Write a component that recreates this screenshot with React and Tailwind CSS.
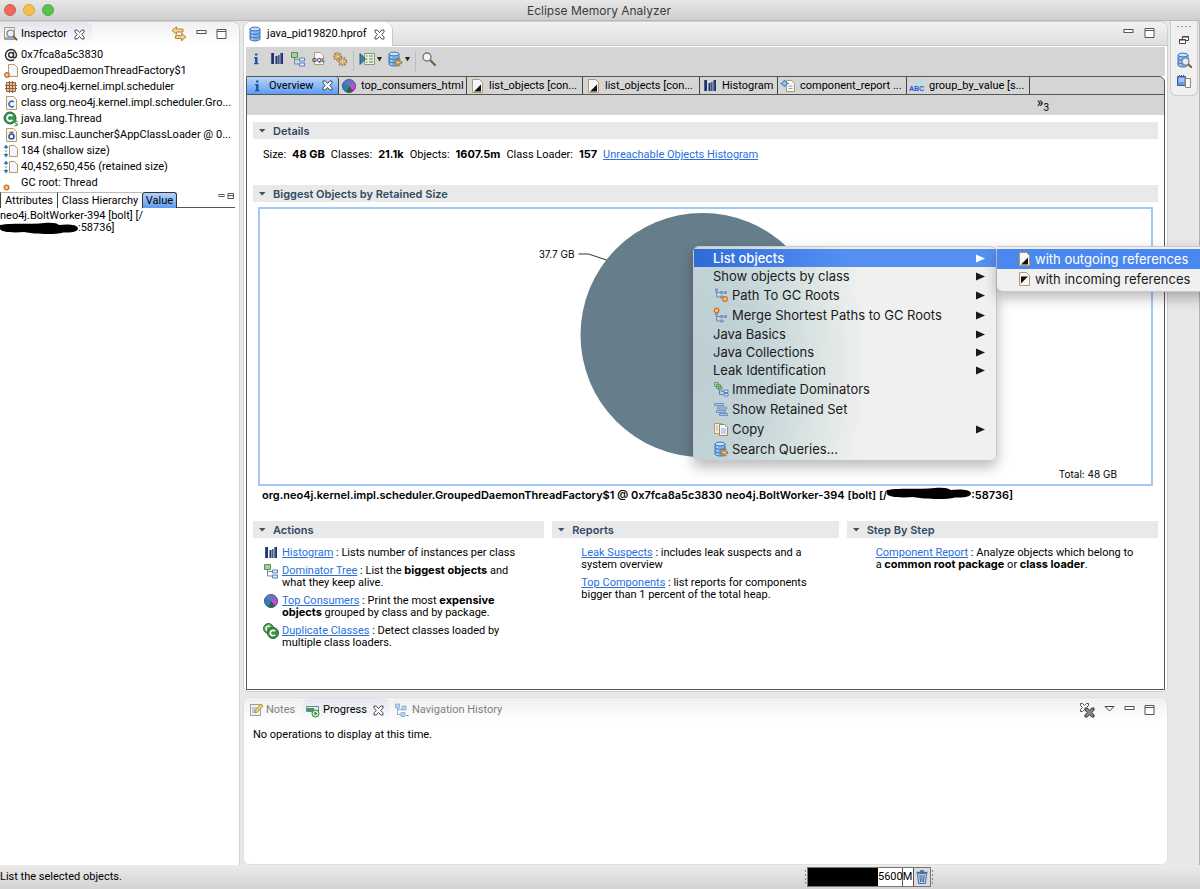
import React from 'react';

const Svg = ({ w = 16, h = 16, className = '', children }) => (
  <svg width={w} height={h} viewBox={`0 0 ${w} ${h}`} className={`shrink-0 ${className}`} fill="none" aria-hidden="true">
    {children}
  </svg>
);

const Page = ({ x = 3, y = 1, w = 10, h = 13 }) => (
  <path
    d={`M${x + 0.5} ${y + 0.5}h${w - 4}l3 3v${h - 4}h-${w - 1}z`}
    fill="#f4f8fe"
    stroke="#b79a5e"
  />
);

const CloseIcon = () => (
  <Svg w={11} h={11}>
    <path d="M1 1h2.200l2.300 2.600L7.800 1H10v2.200L7.600 5.500 10 7.800V10H7.800L5.500 7.400 3.200 10H1V7.800l2.400-2.300L1 3.200z" fill="#fff" stroke="#3a3a3a" strokeWidth=".9" />
  </Svg>
);
const MinIcon = () => (
  <Svg w={11} h={11}><rect x="1" y="1.500" width="9" height="3" fill="#fff" stroke="#555" /></Svg>
);
const MaxIcon = () => (
  <Svg w={11} h={11}><path d="M1 .5h9v9H1zM1 2.500h9" fill="#fff" stroke="#555" /></Svg>
);
const Lens = ({ x = 0, y = 0 }) => (
  <g transform={`translate(${x} ${y})`}>
    <path d="M6.500 6.500l4 4" stroke="#8a5a2e" strokeWidth="2" strokeLinecap="round" />
    <circle cx="4.500" cy="4.500" r="3.500" fill="#e4f0f8" stroke="#7c8791" strokeWidth="1.200" />
  </g>
);
const InspectorIcon = () => (
  <Svg>
    <path d="M2.500 1.500h10v12h-10z" fill="#eef4fb" stroke="#b79a5e" />
    <path d="M3 11h9v2H3z" fill="#8fb0d6" />
    <Lens x={4} y={3} />
  </Svg>
);
const SyncIcon = () => (
  <Svg>
    <path d="M5.500 .8L1 4.500l4.500 3.700V6H12V3H5.500zM10.500 7.300L15 11l-4.500 3.800V12.500H4.500v-3h6z" fill="#f3d489" stroke="#b98233" />
  </Svg>
);
const AtIcon = () => (
  <Svg>
    <path d="M10.500 5v5.200c1 1.300 3 .3 3-2.200a5.500 5.500 0 1 0-2.500 4.700M10.500 8a2.400 2.400 0 1 1-4.800 0 2.400 2.400 0 0 1 4.800 0z" stroke="#333" strokeWidth="1.500" />
  </Svg>
);
const Dot = ({ x, y }) => <circle cx={x} cy={y} r="2.300" fill="#f9c77e" stroke="#c9702a" strokeWidth="1.300" />;
const ObjectIcon = () => <Svg><Page x={5} /><Dot x={4} y={12} /></Svg>;
const PackageIcon = () => (
  <Svg>
    <path d="M3.500 3.500h9v9h-9z" fill="#e8c79b" stroke="#96603c" />
    <path d="M6.500 2v12M9.500 2v12M2 6.500h12M2 9.500h12" stroke="#96603c" />
  </Svg>
);
const ClassFileIcon = () => (
  <Svg><Page x={3} w={11} h={14} /><path d="M10.800 7a2.800 2.800 0 1 0 0 4" stroke="#3e6db5" strokeWidth="1.600" /></Svg>
);
const ThreadIcon = () => (
  <Svg>
    <circle cx="7" cy="7" r="6" fill="#3a9150" stroke="#256b38" />
    <path d="M9.500 5.200a3 3 0 1 0 0 3.600" stroke="#fff" strokeWidth="1.800" />
    <path d="M15 10.500c-3-1-4 1.200-2 1.800 2.500.7 1.500 3-1.500 2" stroke="#48a35c" strokeWidth="1.300" />
  </Svg>
);
const LoaderIcon = () => (
  <Svg><Page x={3} w={11} h={14} /><circle cx="8.500" cy="9.500" r="2.500" stroke="#2e5c9c" strokeWidth="1.600" /><path d="M6.500 5.500h4" stroke="#a34c3a" strokeWidth="1.500" /></Svg>
);
const SizeIcon = () => (
  <Svg>
    <Page x={6} y={2} w={9} h={12} />
    <path d="M3 4v8" stroke="#4b83bd" strokeDasharray="2 1" />
    <path d="M.5 5L3 1.500 5.500 5zM.5 11L3 14.500 5.500 11z" fill="#3974b3" />
  </Svg>
);
const RootIcon = () => <Svg><Dot x={3.500} y={12.500} /></Svg>;

const DbIcon = ({ children }) => (
  <Svg>
    <path d="M2 3v10c0 1 2 2 5 2s5-1 5-2V3" fill="#7fb2ea" stroke="#3f76bb" />
    <ellipse cx="7" cy="3" rx="5" ry="1.900" fill="#c9e1fa" stroke="#3f76bb" />
    <path d="M2 6.500c0 2.400 10 2.400 10 0M2 10c0 2.400 10 2.400 10 0" stroke="#3f76bb" />
    <path d="M4.500 6v1M4.500 9.500v1M4.500 12.500v1" stroke="#e2f0ff" strokeWidth="1.300" />
    {children}
  </Svg>
);
const GearShape = ({ x, y, r = 3 }) => (
  <g>
    <circle cx={x} cy={y} r={r + 0.8} stroke="#a37a3a" strokeWidth="1.600" strokeDasharray="1.500 1.300" />
    <circle cx={x} cy={y} r={r - 0.300} fill="#f6dc9c" stroke="#ac8443" />
    <circle cx={x} cy={y} r="1.200" fill="#fff" stroke="#9c7334" strokeWidth=".7" />
  </g>
);
const InfoIcon = () => (
  <Svg><path d="M7 2.500h2.500v2H7zM6 6h3.500v6h1v1.200H6V12h1V7.200H6z" fill="#2456a0" /></Svg>
);
const HistIcon = () => (
  <Svg>
    <path d="M2 2h3v11H2zM6.500 5h2v8h-2zM9.200 4h1.300v9H9.200zM11.500 2h2.500v11h-2.500z" fill="#1c3468" />
    <path d="M2.500 2v11M12 2v11" stroke="#4766a3" strokeWidth=".8" />
  </Svg>
);
const TreeIcon = () => (
  <Svg>
    <path d="M4.500 6v7h5M4.500 8.500h5" stroke="#6f8fb5" />
    <path d="M1.500 1.500h6v5h-6z" fill="#a7d08c" stroke="#5d8e55" />
    <path d="M9.500 7h5v3h-5zM9.500 12h5v3h-5z" fill="#dbe9fb" stroke="#5b83bb" />
  </Svg>
);
const OqlIcon = () => (
  <Svg>
    <Page x={3} />
    <text x="1" y="11" fontSize="6" fontWeight="700" fill="#37356f" className="font-['Liberation_Sans',sans-serif]">OQL</text>
  </Svg>
);
const GearsIcon = () => <Svg><GearShape x={5.500} y={5.500} r={3} /><GearShape x={10.500} y={10.500} r={3.200} /></Svg>;
const RunIcon = () => (
  <Svg>
    <path d="M5.500 2.500h10v11h-10z" fill="#e9f3df" stroke="#8b9a63" />
    <path d="M7 5h1.500M10 5h4M7 8h1.500M10 8h4M7 11h1.500M10 11h4" stroke="#54845c" />
    <path d="M1 2.500l5.500 5.500L1 13.500z" fill="#3f7fae" stroke="#275a80" />
  </Svg>
);
const DbGearIcon = () => <DbIcon><GearShape x={11} y={11.500} r={2.600} /></DbIcon>;
const DbLensIcon = () => <DbIcon><Lens x={5} y={5} /></DbIcon>;
const SearchIcon = () => (
  <Svg>
    <path d="M9 9l5 5" stroke="#8a5a2e" strokeWidth="2.200" strokeLinecap="round" />
    <circle cx="6" cy="6" r="4" fill="#f4f7f8" stroke="#777" strokeWidth="1.400" />
  </Svg>
);
const PieIcon = () => (
  <Svg>
    <circle cx="8" cy="8" r="6.500" fill="#6a73bd" />
    <path d="M8 8L4 13.200A6.500 6.500 0 0 1 2.500 4.500z" fill="#2f7dc0" />
    <path d="M8 8l6-3a6.500 6.500 0 0 1-1.500 8z" fill="#e03fdc" />
    <path d="M8 8l4.500 5a6.500 6.500 0 0 1-7.500.8z" fill="#246b3c" />
    <circle cx="8" cy="8" r="6.500" stroke="#3d5c94" />
  </Svg>
);
const OutIcon = () => <Svg><Page x={3} w={11} h={14} /><path d="M12 6.500v7H5z" fill="#111" /></Svg>;
const InIcon = () => <Svg><Page x={3} w={11} h={14} /><path d="M5 5.500h7L5 12.500z" fill="#111" /></Svg>;
const ReportIcon = () => (
  <Svg>
    <Page x={6} y={2} w={9} h={12} />
    <path d="M8.500 8h4M8.500 10.500h4" stroke="#7ea4d4" />
    <path d="M0 5.500h3M6 5.500h3M4.500 2.500l3 3-3 3-3-3z" fill="#a9c9ee" stroke="#4c86cc" strokeWidth="1.100" />
  </Svg>
);
const AbcIcon = () => (
  <Svg>
    <path d="M10 1h4v4h-4zM6 3h3v3H6z" fill="#9fe8ee" />
    <text x="0" y="13" fontSize="7" fontWeight="700" fill="#2455e8" className="font-['Liberation_Sans',sans-serif]">ABC</text>
  </Svg>
);
const DupIcon = () => (
  <Svg>
    <circle cx="5.500" cy="5.500" r="5" fill="#5aa65a" stroke="#2c7334" />
    <path d="M7 3.500a2.500 2.500 0 1 0-3 4" stroke="#fff" strokeWidth="1.300" />
    <circle cx="10" cy="10" r="5.500" fill="#3a9148" stroke="#256b30" />
    <path d="M12 8.200a2.700 2.700 0 1 0 0 3.600" stroke="#fff" strokeWidth="1.700" />
  </Svg>
);
const Branches = ({ y = 0 }) => (
  <g transform={`translate(0 ${y})`}>
    <path d="M3.500 3v7h8M3.500 5.500h8" stroke="#7187b8" />
    <path d="M2 1.500h3v3H2zM7 4h3v3H7zM11 4h3v3h-3zM7 8.500h3v3H7z" fill="#7f97c8" />
  </g>
);
const PathIcon = () => <Svg><Branches y={0} /><Dot x={12} y={12} /></Svg>;
const MergeIcon = () => <Svg><Branches y={4} /><Dot x={3.500} y={3.500} /></Svg>;
const DomIcon = () => (
  <Svg>
    <path d="M1.500 1.500h4v4h-4zM3.500 3.500h4v4h-4zM5.500 5.500h3.500v3.500H5.500z" fill="#a9cf98" stroke="#5c9160" strokeWidth=".8" />
    <path d="M6.500 9v4.500h4M8 10.500h3" stroke="#5b83bb" />
    <path d="M11 9h4v2.500h-4zM11 12.500h4V15h-4z" fill="#dbe9fb" stroke="#5b83bb" />
  </Svg>
);
const SetIcon = () => (
  <Svg>
    <path d="M1.500 2.500h9v2h-9zM4.500 6h9v2h-9zM3.500 9.500h9v2h-9zM6.500 12.500h8v2h-8z" fill="#a9c2e6" stroke="#6485b8" strokeWidth=".8" />
  </Svg>
);
const CopyIcon = () => (
  <Svg>
    <path d="M1.500 2.500h7v10h-7z" fill="#f7efd9" stroke="#b79a5e" />
    <path d="M6.500 3.500h5l3 3v8h-8z" fill="#f2f7fe" stroke="#a08a5c" />
    <path d="M8 8h5M8 10h5M8 12h5M3 5h2M3 7h2M3 9h2" stroke="#7d99c4" strokeWidth=".8" />
  </Svg>
);
const NotesIcon = () => (
  <Svg>
    <path d="M2.500 2.500h10v11h-10z" fill="#f1f1ee" stroke="#9d9d9d" />
    <path d="M4 6h5M4 8h4M4 10h3" stroke="#8fa5c0" />
    <path d="M6.500 11l1-3L13 2l2 2-5.500 6z" fill="#efd36b" stroke="#9c8a44" strokeWidth=".9" />
  </Svg>
);
const ProgressIcon = () => (
  <Svg>
    <path d="M1.500 4.500h12v5h-12z" fill="#e3ecf2" stroke="#6d8797" />
    <path d="M2 6h7v3H2z" fill="#3f9a52" />
    <circle cx="10.500" cy="11.500" r="3.500" fill="#d7f1d2" stroke="#2f8340" />
    <path d="M9.500 9.500l3 2-3 2z" fill="#2f8340" />
  </Svg>
);
const NavIcon = () => (
  <Svg>
    <path d="M3.500 5v7.500h4M4 7.500h5" stroke="#93a9c8" />
    <path d="M1.500 2h4v4h-4zM8 4h4v4H8zM7 10.500h4v4H7z" fill="#b7d2f4" stroke="#87a9d6" strokeWidth=".8" />
    <path d="M12.500 13.500h2" stroke="#777" />
  </Svg>
);
const ClearAllIcon = () => (
  <Svg>
    <path d="M1.500 1.500h2l2 2 2-2h2v2l-2 2 2 2v2h-2l-2-2-2 2h-2v-2l2-2-2-2z" fill="#fff" stroke="#555" />
    <path d="M6 6h2.200l2.300 2.300L12.800 6H15v2.200l-2.300 2.300 2.300 2.300V15h-2.200l-2.300-2.300L8.200 15H6v-2.200l2.300-2.300L6 8.200z" fill="#888" stroke="#333" />
  </Svg>
);
const RestoreIcon = () => (
  <Svg w={12} h={12}>
    <path d="M4.500 2.500h6v4h-6zM4 3h7" fill="#fff" stroke="#444" />
    <path d="M1.500 5.500h6v4h-6zM1 6h7" fill="#fff" stroke="#5d3a32" />
  </Svg>
);
const CompareIcon = () => (
  <Svg>
    <path d="M1.500 2.500h8v9h-8z" fill="#6d9be0" stroke="#2f5da8" />
    <path d="M3 5h5M3 7h5" stroke="#dcebff" />
    <path d="M3 1.500h6" stroke="#2f5da8" strokeDasharray="1 1" />
    <path d="M9.500 4.500h5v9h-5z" fill="#f7f9fe" stroke="#97875c" />
  </Svg>
);
const TrashIcon = () => (
  <Svg w={14} h={16}>
    <path d="M2.500 4.500h9l-1 10h-7z" fill="#b4cdee" stroke="#47709f" />
    <path d="M5 6l.5 7M7 6v7M9 6l-.5 7" stroke="#47709f" />
    <path d="M1.500 3.500h11M5 2h4" stroke="#47709f" strokeWidth="1.500" />
  </Svg>
);

const Chevron = () => (
  <Svg w={8} h={6}><path d="M1 1h6.500L4.200 4.500z" fill="#3b5266" /></Svg>
);
const DropArrow = () => (
  <Svg w={6} h={5}><path d="M1 0h5L3.500 4.500z" fill="#222" /></Svg>
);

const Scribble = ({ w }) => (
  <svg width={w} height="12" viewBox="0 0 90 12" preserveAspectRatio="none" className="shrink-0" aria-hidden="true">
    <path d="M0 3C10 1 30 2 45 1.500 58 0 66 1 68 3c8-1 21-1 22 3 0 4-8 5-17 4.500C62 13 40 12 28 10 14 11 1 10 0 7z" fill="#000" />
  </svg>
);

const IconButton = ({ label, children }) => (
  <button type="button" aria-label={label} className="flex items-center gap-px">{children}</button>
);

const inspectorRows = [
  [AtIcon, '0x7fca8a5c3830'],
  [ObjectIcon, 'GroupedDaemonThreadFactory$1'],
  [PackageIcon, 'org.neo4j.kernel.impl.scheduler'],
  [ClassFileIcon, 'class org.neo4j.kernel.impl.scheduler.Gro...'],
  [ThreadIcon, 'java.lang.Thread'],
  [LoaderIcon, 'sun.misc.Launcher$AppClassLoader @ 0...'],
  [SizeIcon, '184 (shallow size)'],
  [SizeIcon, '40,452,650,456 (retained size)'],
  [RootIcon, 'GC root: Thread'],
];

function Inspector() {
  return (
    <aside className="flex w-[240px] shrink-0 flex-col rounded-tr-lg border-r border-t border-[#d2d2d2] bg-white">
      <div className="flex h-6 shrink-0 items-center rounded-tr-lg bg-gradient-to-b from-[#f1f1f1] to-white">
        <button type="button" className="flex h-full w-[92px] items-center gap-[3px] rounded-tr-md bg-gradient-to-b from-[#e3e5ec] to-white pl-[2px]">
          <InspectorIcon />
          <span>Inspector</span>
          <span className="ml-1"><CloseIcon /></span>
        </button>
        <div className="ml-auto flex items-center gap-[9px] pr-3">
          <IconButton label="Link with snapshot"><SyncIcon /></IconButton>
          <IconButton label="Minimize"><MinIcon /></IconButton>
          <IconButton label="Maximize"><MaxIcon /></IconButton>
        </div>
      </div>
      <ul className="pt-px">
        {inspectorRows.map(([Icon, text]) => (
          <li key={text} className="flex h-4 items-center gap-[2px] whitespace-nowrap pl-[3px]">
            <Icon />
            <span>{text}</span>
          </li>
        ))}
      </ul>
      <div className="mt-px flex h-4 items-stretch pr-1">
        <button type="button" className="w-[57px] border-l border-t border-[#444] border-t-[#bbb]">Attributes</button>
        <button type="button" className="w-[85px] whitespace-nowrap border-l border-t border-[#444] border-t-[#bbb]">Class Hierarchy</button>
        <button type="button" className="w-[35px] rounded-t-[3px] border border-b-0 border-[#333] bg-gradient-to-b from-[#b4d1f8] to-[#5f9bee]">Value</button>
        <div className="flex flex-1 items-start justify-end gap-px border-b border-[#555]">
          <Svg w={8} h={8}><rect x="1" y="2.500" width="5" height="2" fill="#fff" stroke="#555" /></Svg>
          <Svg w={8} h={8}><path d="M1 1.500h5.500v5H1zM1 3.500h5.500" fill="#fff" stroke="#555" /></Svg>
        </div>
      </div>
      <div className="pt-[2px] leading-3">
        <div>neo4j.BoltWorker-394 [bolt] [/</div>
        <div className="flex items-center"><Scribble w={78} />:58736]</div>
      </div>
    </aside>
  );
}

const tabs = [
  [InfoIcon, 'Overview', 'w-[92px]'],
  [PieIcon, 'top_consumers_html', 'w-[128px]'],
  [OutIcon, 'list_objects [con...', 'w-[116px]'],
  [OutIcon, 'list_objects [con...', 'w-[117px]'],
  [HistIcon, 'Histogram', 'w-[78px]'],
  [ReportIcon, 'component_report ...', 'w-[129px]'],
  [AbcIcon, 'group_by_value [s...', 'w-[123px]'],
];

const Section = ({ title, children }) => (
  <section>
    <h2>
      <button type="button" className="flex h-[17px] w-full items-center gap-[7px] bg-[#e9e9e9] pl-[5px] font-['Inter',sans-serif] font-semibold text-[#2f4a63]">
        <Chevron />
        {title}
      </button>
    </h2>
    {children}
  </section>
);

const Link = ({ children }) => <a href="#" className="text-[#2a6fdb] underline">{children}</a>;
const B = ({ children }) => <b className="font-['Inter',sans-serif] font-bold leading-none">{children}</b>;

const Entry = ({ icon: Icon, children }) => (
  <li className="flex gap-[3px] leading-3">
    <span className="-mt-[2px] h-3 w-4 shrink-0">{Icon && <Icon />}</span>
    <p>{children}</p>
  </li>
);

const menuItems = [
  [null, 'List objects', true],
  [null, 'Show objects by class', true],
  [PathIcon, 'Path To GC Roots', true],
  [MergeIcon, 'Merge Shortest Paths to GC Roots', true],
  [null, 'Java Basics', true],
  [null, 'Java Collections', true],
  [null, 'Leak Identification', true],
  [DomIcon, 'Immediate Dominators', false],
  [SetIcon, 'Show Retained Set', false],
  [CopyIcon, 'Copy', true],
  [DbGearIcon, 'Search Queries...', false],
];

function ContextMenu() {
  return (
    <div className="absolute left-[433px] top-[37px] z-20 flex items-start font-['Inter',sans-serif] text-[13px] text-[#1a1a1a]">
      <ul className="w-[304px] rounded-md border border-[#c4cacc] bg-[radial-gradient(ellipse_175px_260px_at_0%_55%,#bccdd4_0%,#c3d4d8_40%,#dbe5e3_72%,#f0f0f0_100%)] pb-px pt-[2px] shadow-[0_6px_14px_rgba(0,0,0,0.28)]">
        {menuItems.map(([Icon, text, sub], i) => (
          <li key={text}>
            <button
              type="button"
              className={`flex w-full items-center gap-[3px] pl-[19px] pr-[11px] text-left ${Icon ? 'h-5' : 'h-[18px]'} ${i === 0 ? 'bg-gradient-to-r from-[#2f6bd8] to-[#5490f2] to-50% font-medium text-white' : ''}`}
            >
              {Icon && <Icon />}
              <span className="flex-1">{text}</span>
              {sub && <Svg w={9} h={9}><path d="M0 0.500l9 4-9 4z" fill="currentColor" /></Svg>}
            </button>
          </li>
        ))}
      </ul>
      <ul className="w-[230px] rounded-b-md border border-l-0 border-[#c9c9c9] bg-[#f0f0f0] py-[2px] shadow-[0_6px_14px_rgba(0,0,0,0.28)]">
        <li>
          <button type="button" className="flex h-5 w-full items-center gap-[3px] bg-[#4a88ef] pl-[19px] text-white"><OutIcon />with outgoing references</button>
        </li>
        <li>
          <button type="button" className="flex h-5 w-full items-center gap-[3px] pl-[19px]"><InIcon />with incoming references</button>
        </li>
      </ul>
    </div>
  );
}

function Chart() {
  return (
    <div className="relative mx-[5px] mt-[5px] border-2 border-[#a5c8fa]">
      <svg className="block h-[275px] w-full" role="img" aria-label="Biggest objects by retained size">
        <svg x="50%" className="overflow-visible">
          <circle cx="-3" cy="126" r="122" fill="#667d8b" />
          <path d="M-127 45h10l18 6" fill="none" stroke="#333" />
          <text x="-131" y="49" textAnchor="end" className="font-['Inter',sans-serif] text-[10px]">37.7 GB</text>
        </svg>
        <text x="100%" dx="-34" y="269" textAnchor="end" className="font-['Inter',sans-serif] text-[10px]">Total: 48 GB</text>
      </svg>
      <ContextMenu />
    </div>
  );
}

function Overview() {
  return (
    <div className="flex-1 bg-white px-[6px] pt-[7px]">
      <Section title="Details">
        <p className="flex h-[46px] items-baseline gap-[6px] whitespace-nowrap pl-[10px] pt-2">
          <span>Size:</span><B>48 GB</B><span>Classes:</span><B>21.1k</B><span>Objects:</span><B>1607.5m</B><span>Class Loader:</span><B>157</B>
          <Link>Unreachable Objects Histogram</Link>
        </p>
      </Section>
      <Section title="Biggest Objects by Retained Size">
        <Chart />
        <p className="flex h-[35px] items-start whitespace-nowrap pl-[9px] pt-px font-['Inter',sans-serif] font-semibold leading-4">
          org.neo4j.kernel.impl.scheduler.GroupedDaemonThreadFactory$1 @ 0x7fca8a5c3830 neo4j.BoltWorker-394 [bolt] [/
          <Scribble w={84} />:58736]
        </p>
      </Section>
      <div className="grid grid-cols-[291fr_286fr_311fr] gap-2">
        <Section title="Actions">
          <ul className="flex flex-col gap-[6px] pl-[10px] pt-[9px]">
            <Entry icon={HistIcon}><Link>Histogram</Link> : Lists number of instances per class</Entry>
            <Entry icon={TreeIcon}><Link>Dominator Tree</Link> : List the <B>biggest objects</B> and<br />what they keep alive.</Entry>
            <Entry icon={PieIcon}><Link>Top Consumers</Link> : Print the most <B>expensive<br />objects</B> grouped by class and by package.</Entry>
            <Entry icon={DupIcon}><Link>Duplicate Classes</Link> : Detect classes loaded by<br />multiple class loaders.</Entry>
          </ul>
        </Section>
        <Section title="Reports">
          <ul className="flex flex-col gap-[6px] pl-[10px] pt-[9px]">
            <Entry><Link>Leak Suspects</Link> : includes leak suspects and a<br />system overview</Entry>
            <Entry><Link>Top Components</Link> : list reports for components<br />bigger than 1 percent of the total heap.</Entry>
          </ul>
        </Section>
        <Section title="Step By Step">
          <ul className="pl-[10px] pt-[9px]">
            <Entry><Link>Component Report</Link> : Analyze objects which belong to<br />a <B>common root package</B> or <B>class loader</B>.</Entry>
          </ul>
        </Section>
      </div>
    </div>
  );
}

function Editor() {
  return (
    <section className="flex flex-1 flex-col rounded-t-lg rounded-b-md border border-[#cfcfcf] bg-white px-[2px] pb-px">
      <div className="-mx-[2px] flex h-6 shrink-0 items-stretch rounded-t-lg border-b border-[#c3c6d8] bg-gradient-to-b from-[#f2f2f2] to-[#dedede]">
        <button type="button" className="-mb-px flex w-[149px] items-center gap-[3px] rounded-t-lg border-r border-[#c3c6d8] bg-white pl-1">
          <DbIcon />
          <span>java_pid19820.hprof</span>
          <span className="ml-1"><CloseIcon /></span>
        </button>
        <div className="ml-auto flex items-center gap-[10px] pr-3">
          <IconButton label="Minimize editor"><MinIcon /></IconButton>
          <IconButton label="Maximize editor"><MaxIcon /></IconButton>
        </div>
      </div>
      <div className="mt-px flex h-[29px] shrink-0 items-start gap-[5px] bg-[#d5d5d5] pl-[2px] pt-1">
        <IconButton label="Overview"><InfoIcon /></IconButton>
        <IconButton label="Histogram"><HistIcon /></IconButton>
        <IconButton label="Dominator tree"><TreeIcon /></IconButton>
        <IconButton label="OQL"><OqlIcon /></IconButton>
        <IconButton label="Thread overview"><GearsIcon /></IconButton>
        <div className="h-5 w-px bg-[#bdbdbd]" />
        <IconButton label="Run expert system test"><RunIcon /><DropArrow /></IconButton>
        <IconButton label="Query browser"><DbGearIcon /><DropArrow /></IconButton>
        <div className="h-5 w-px bg-[#bdbdbd]" />
        <IconButton label="Find object"><SearchIcon /></IconButton>
      </div>
      <div className="flex flex-1 flex-col rounded-tr-md border border-[#555] bg-[#d5d5d5]">
        <div className="flex h-[18px] shrink-0 border-b border-[#555]" role="tablist">
          {tabs.map(([Icon, text, width], i) => (
            <button
              key={i}
              type="button"
              role="tab"
              aria-selected={i === 0}
              className={`flex shrink-0 items-center gap-1 whitespace-nowrap border-r border-[#444] pl-[2px] ${width} ${i === 0 ? 'rounded-t-[3px] bg-gradient-to-b from-[#b9d5fa] to-[#5c9cf2]' : ''}`}
            >
              <Icon />
              <span>{text}</span>
              {i === 0 && <span className="ml-1"><CloseIcon /></span>}
            </button>
          ))}
        </div>
        <div className="flex h-[20px] shrink-0 items-start justify-end pr-[115px]">
          <button type="button" aria-label="Show 3 more tabs" className="flex pt-px leading-3"><span className="text-[14px]">»</span><span className="pt-[6px] text-[10px]">3</span></button>
        </div>
        <Overview />
      </div>
    </section>
  );
}

function BottomPanel() {
  return (
    <section className="h-[168px] shrink-0 rounded-lg rounded-b-md border border-[#e0e0e0] bg-white">
      <div className="flex h-6 items-stretch rounded-t-lg bg-gradient-to-b from-[#f0f0f0] to-white text-[#808080]">
        <button type="button" className="flex w-[58px] items-center gap-[2px] pl-1"><NotesIcon />Notes</button>
        <button type="button" className="flex w-[88px] items-center gap-[2px] rounded-t-lg bg-gradient-to-b from-[#e3e5ec] to-white pl-[3px] text-black">
          <ProgressIcon />Progress<span className="ml-1"><CloseIcon /></span>
        </button>
        <button type="button" className="flex items-center gap-[2px] pl-1"><NavIcon />Navigation History</button>
        <div className="ml-auto flex items-center gap-[9px] pr-3">
          <IconButton label="Remove all finished operations"><ClearAllIcon /></IconButton>
          <IconButton label="View menu"><Svg w={11} h={11}><path d="M1 1.500h9L5.500 6z" fill="#fff" stroke="#444" /></Svg></IconButton>
          <IconButton label="Minimize"><MinIcon /></IconButton>
          <IconButton label="Maximize"><MaxIcon /></IconButton>
        </div>
      </div>
      <p className="pl-[9px] pt-[5px]">No operations to display at this time.</p>
    </section>
  );
}

const Handle = () => (
  <Svg w={3} h={16}><path d="M1.500 1v15" stroke="#888" strokeDasharray="2 2" /></Svg>
);

export default function App() {
  return (
    <div className="flex min-h-screen flex-col overflow-hidden bg-[#e8e8e8] font-[Roboto,sans-serif] text-[11px] leading-4 text-black">
      <header className="flex h-[21px] shrink-0 items-center border-b border-[#b8b8b8] bg-gradient-to-b from-[#e7e7e7] to-[#cfcfcf] px-1">
        <div className="flex w-14 gap-[7px]">
          <button type="button" aria-label="Close window" className="h-3 w-3 rounded-full border border-[#d9574c] bg-[#ed6a5e]" />
          <button type="button" aria-label="Minimize window" className="h-3 w-3 rounded-full border border-[#dda63c] bg-[#f5bf4f]" />
          <button type="button" aria-label="Zoom window" className="h-3 w-3 rounded-full border border-[#4fae44] bg-[#58c24c]" />
        </div>
        <h1 className="flex-1 pr-[58px] pt-px text-center font-['Inter',sans-serif] text-[12px] text-[#3c3c3c]">Eclipse Memory Analyzer</h1>
      </header>
      <div className="flex flex-1">
        <Inspector />
        <main className="ml-[3px] flex min-w-0 flex-1 flex-col gap-[5px]">
          <Editor />
          <BottomPanel />
        </main>
        <nav className="w-8 shrink-0 border-r border-[#b5b5b5] pl-[2px] pr-px">
          <div className="flex h-[75px] flex-col items-center gap-[6px] rounded-b-md border border-t-0 border-[#cdcdcd] bg-[#f0f0f0] pt-1">
            <Svg w={15} h={3}><path d="M0 1.500h15" stroke="#999" strokeDasharray="2 2" /></Svg>
            <IconButton label="Restore"><RestoreIcon /></IconButton>
            <IconButton label="Heap dump history"><DbLensIcon /></IconButton>
            <IconButton label="Compare basket"><CompareIcon /></IconButton>
          </div>
        </nav>
      </div>
      <footer className="flex h-6 shrink-0 items-center bg-gradient-to-b from-[#ebebeb] to-[#d3d3d3]">
        <span className="w-[67%]">List the selected objects.</span>
        <Handle />
        <div className="flex h-5 items-stretch border border-[#777] bg-white">
          <div className="w-[70px] bg-black" />
          <div className="flex w-9 items-center border-r border-[#555] bg-[linear-gradient(#555,#555)] bg-[length:1px_100%] bg-[position:24px_0] bg-no-repeat">
            <span>5600M</span>
          </div>
          <button type="button" aria-label="Run garbage collector" className="flex w-4 items-center justify-center bg-[#dcdcdc]"><TrashIcon /></button>
        </div>
        <Handle />
      </footer>
    </div>
  );
}
